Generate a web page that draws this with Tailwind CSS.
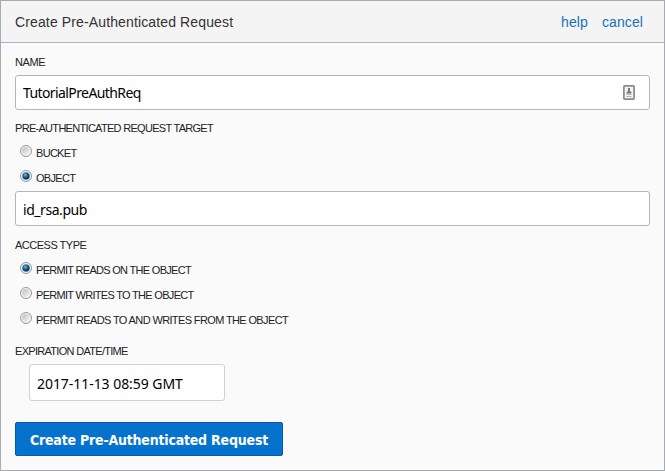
<!DOCTYPE html>
<html lang="en">
<head>
<meta charset="utf-8">
<title>Create Pre-Authenticated Request</title>
<script src="https://cdn.jsdelivr.net/npm/@tailwindcss/browser@4"></script>
</head>
<body class="bg-white font-['Liberation_Sans',Arial,sans-serif]">
<svg class="absolute size-0" aria-hidden="true">
  <defs>
    <radialGradient id="dot" cx=".4" cy=".35" r=".65"><stop offset="0" stop-color="#7fc4e8"/><stop offset=".45" stop-color="#1f6596"/><stop offset="1" stop-color="#0c2c4c"/></radialGradient>
    <linearGradient id="well" x1="0" y1="0" x2="1" y2="1"><stop offset="0" stop-color="#bcbdbf"/><stop offset="1" stop-color="#f8f8f8"/></linearGradient>
    <symbol id="off" viewBox="0 0 12 12"><circle cx="6" cy="6" r="5.5" fill="#f6f6f6" stroke="#949698"/><circle cx="6" cy="6" r="3.9" fill="url(#well)"/></symbol>
    <symbol id="on" viewBox="0 0 12 12"><circle cx="6" cy="6" r="5.5" fill="#eef3f6" stroke="#8d9aa3"/><circle cx="6" cy="6" r="4.1" fill="#b5cad8"/><circle cx="6" cy="6" r="3.5" fill="url(#dot)"/></symbol>
  </defs>
</svg>
<main class="flex h-[471px] w-[665px] flex-col border border-[#a9abb0] bg-[#fafafa] text-[#222]">
  <header class="flex h-[42px] shrink-0 items-center justify-between border-b border-[#b0b1b6] bg-[#f4f4f4] pt-0.5 pr-[21px] pl-3.5 text-[14px] text-[#333]">
    <h1 class="tracking-[0.13px]">Create Pre-Authenticated Request</h1>
    <nav class="flex gap-3.5 tracking-[0.1px] text-[#1b6fbd]"><a>help</a><a>cancel</a></nav>
  </header>
  <form class="flex flex-col pr-3.5 pl-3.5 text-[11px] leading-4 tracking-[-0.7px]">
    <label class="mt-[11px] tracking-[-0.4px]">NAME</label>
    <div class="mt-[5px] flex h-[35px] items-center justify-between rounded-[3px] border border-[#b4b6ba] bg-white pr-3.5 pl-[7px]">
      <span class="font-['Noto_Sans',sans-serif] text-[14px] tracking-[-0.6px] text-black">TutorialPreAuthReq</span>
      <svg class="h-[15px] w-3" viewBox="0 0 12 15"><rect x=".9" y=".9" width="10.2" height="13.2" rx=".8" fill="#f4f4f4" stroke="#898989" stroke-width="1.7"/><path d="M6 3v3" stroke="#777" stroke-width="2"/><path d="M3.5 8.5V7.2L5 6h2l1.500 1.200v1.300z" fill="#777"/><path d="M3.500 9.500h5M3.500 11.500h5" stroke="#b5b5b5"/></svg>
    </div>
    <p class="mt-[10px]">PRE-AUTHENTICATED REQUEST TARGET</p>
    <div class="mt-[9px] flex h-4 gap-1 pl-[5px]"><svg class="size-3"><use href="#off"/></svg><span>BUCKET</span></div>
    <div class="mt-[9px] flex h-4 gap-1 pl-[5px]"><svg class="size-3"><use href="#on"/></svg><span>OBJECT</span></div>
    <div class="mt-[5px] flex h-[35px] items-center rounded-[3px] border border-[#b4b6ba] bg-white pt-[3px] pl-[7px]">
      <span class="font-['Noto_Sans',sans-serif] text-[14px] tracking-[-0.45px] text-black">id_rsa.pub</span>
    </div>
    <p class="mt-[11px] tracking-[-0.5px]">ACCESS TYPE</p>
    <div class="mt-[9px] flex h-4 gap-1 pl-[5px]"><svg class="size-3"><use href="#on"/></svg><span>PERMIT READS ON THE OBJECT</span></div>
    <div class="mt-[9px] flex h-4 gap-1 pl-[5px]"><svg class="size-3"><use href="#off"/></svg><span>PERMIT WRITES TO THE OBJECT</span></div>
    <div class="mt-[9px] flex h-4 gap-1 pl-[5px]"><svg class="size-3"><use href="#off"/></svg><span class="tracking-[-0.63px]">PERMIT READS TO AND WRITES FROM THE OBJECT</span></div>
    <p class="mt-[15px]">EXPIRATION DATE/TIME</p>
    <div class="mt-[5px] ml-3.5 flex h-[37px] w-[196px] items-center rounded-[3px] border border-[#d0d1d4] bg-white pt-0.5 pl-[7px]">
      <span class="font-['Noto_Sans',sans-serif] text-[14px] tracking-[-0.05px] text-black">2017-11-13 08:59 GMT</span>
    </div>
    <button type="button" class="mt-[21px] h-[34px] w-[268px] rounded-[2px] border border-[#085aa8] bg-[#0572ce] pt-0.5 font-['DejaVu_Sans_Condensed','DejaVu_Sans',sans-serif] text-[14px] font-bold tracking-[-0.2px] text-white">Create Pre-Authenticated Request</button>
  </form>
</main>
</body>
</html>
